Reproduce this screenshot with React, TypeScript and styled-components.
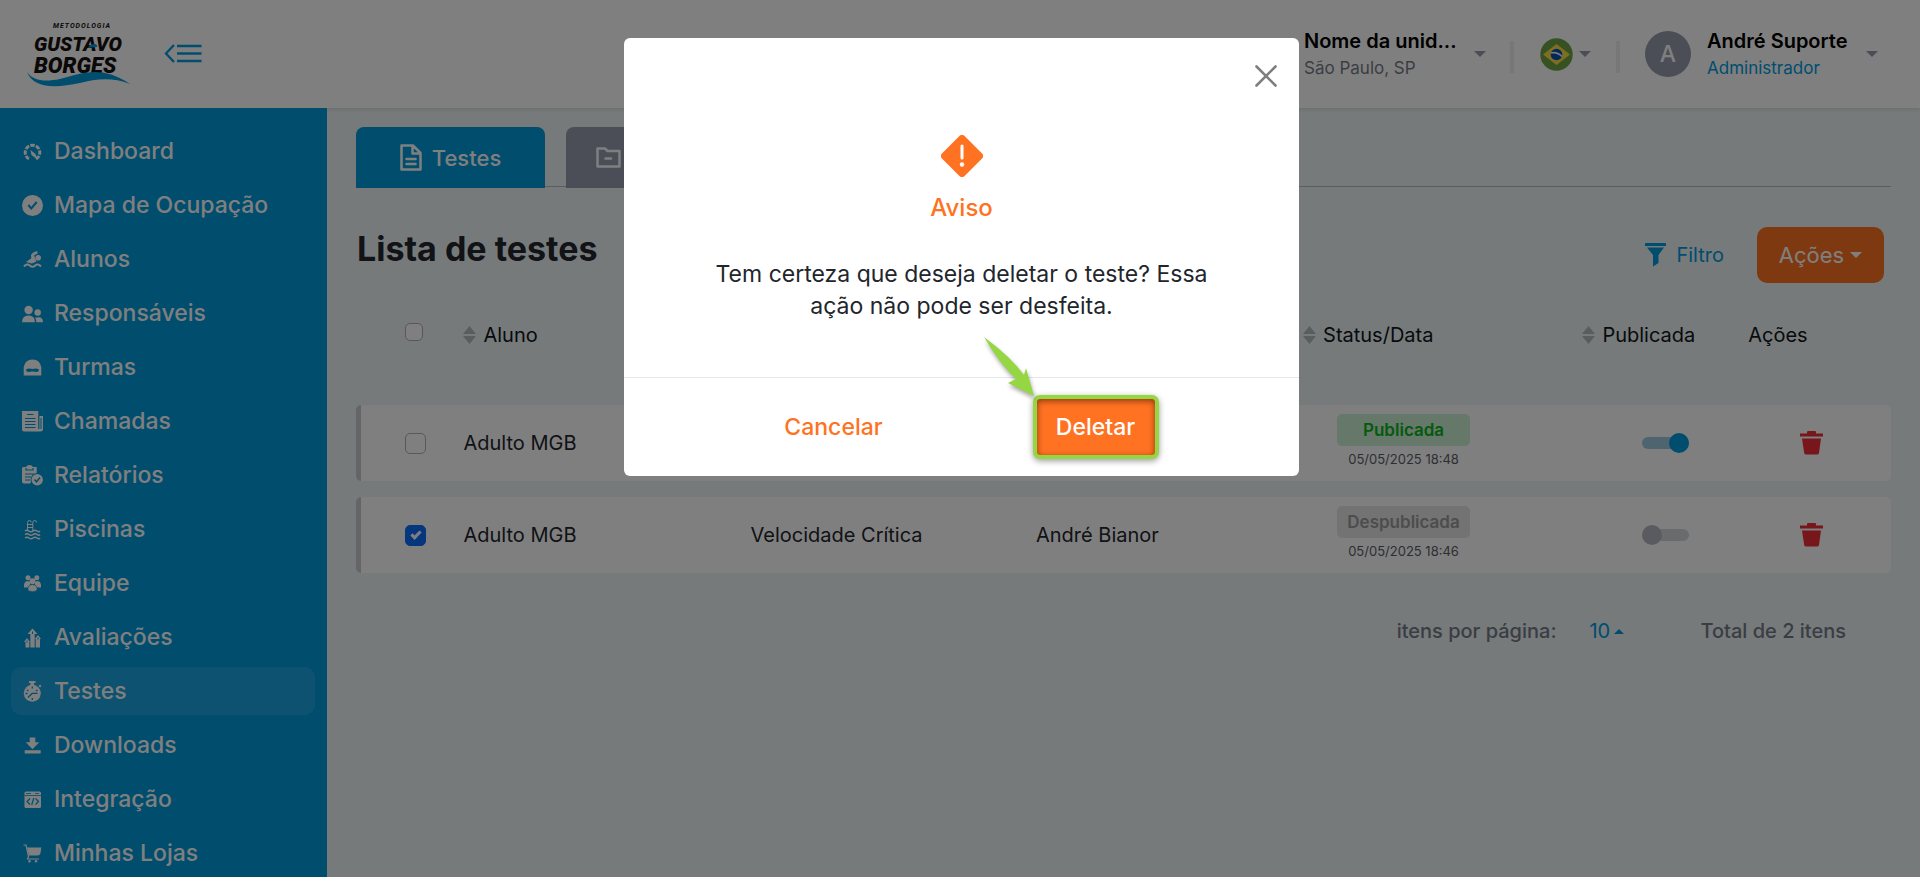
import React from "react";
import styled, { createGlobalStyle, css } from "styled-components";

const c = {
  blue: "#009add",
  orange: "#ff7222",
  page: "#ecf4f6",
  slate: "#969cae",
  muted: "#777b88",
  ink: "#22262c",
  red: "#ee2c36",
  lime: "#95d742",
};

const Global = createGlobalStyle`
  *, *::before, *::after { box-sizing: border-box; }
  body { margin: 0; background: ${c.page}; color: ${c.ink}; font-family: Inter, "Open Sans", sans-serif; font-size: 20px; }
  button, select { font: inherit; color: inherit; background: none; border: 0; padding: 0; cursor: pointer; }
  a { color: inherit; text-decoration: none; }
  h1, h2, p { margin: 0; }
  svg { display: block; flex: none; }
`;

/* ---------- shell ---------- */
const Shell = styled.div`
  display: flex;
  flex-direction: column;
  min-height: 100vh;
`;
const Header = styled.header`
  display: flex;
  align-items: center;
  height: 108px;
  padding: 0 42px 0 24px;
  background: #fff;
  box-shadow: 0 1px 4px rgba(0, 0, 0, 0.12);
`;
const Body = styled.div`
  display: flex;
  flex: 1;
`;
const Sidebar = styled.nav`
  flex: none;
  width: 327px;
  padding: 19px 12px 0 11px;
  background: ${c.blue};
`;
const Menu = styled.ul`
  display: flex;
  flex-direction: column;
  gap: 6px;
  margin: 0;
  padding: 0;
  list-style: none;
`;
const MenuLink = styled.a<{ $active?: boolean }>`
  display: flex;
  align-items: center;
  gap: 11px;
  height: 48px;
  padding-left: 11px;
  border-radius: 10px;
  color: #fff;
  font-size: 23px;
  font-weight: 500;
  background: ${(p) => (p.$active ? "rgba(255, 255, 255, 0.1)" : "transparent")};
`;
const Main = styled.main`
  flex: 1;
  min-width: 0;
  padding: 19px 29px 0;
`;

/* ---------- header ---------- */
const Collapse = styled.button`
  margin-left: 30px;
  color: ${c.blue};
`;
const HeaderRight = styled.div`
  display: flex;
  align-items: center;
  margin-left: auto;
`;
const HeaderButton = styled.button<{ $gap: number }>`
  display: flex;
  align-items: center;
  gap: ${(p) => p.$gap}px;
  text-align: left;
`;
const Stack = styled.span<{ $width: number }>`
  display: flex;
  flex-direction: column;
  width: ${(p) => p.$width}px;
  white-space: nowrap;
`;
const Strong = styled.span`
  color: #000;
  font-size: 20px;
  font-weight: 600;
  line-height: 28px;
`;
const Sub = styled.span<{ $accent?: boolean }>`
  color: ${(p) => (p.$accent ? c.blue : c.muted)};
  font-size: 17px;
  line-height: 26px;
`;
const Divider = styled.span<{ $left: number; $right: number }>`
  width: 4px;
  height: 32px;
  margin: 6px ${(p) => p.$right}px 0 ${(p) => p.$left}px;
  background: #eeeef0;
`;
const Avatar = styled.span`
  display: grid;
  place-items: center;
  width: 46px;
  height: 46px;
  border-radius: 50%;
  background: ${c.slate};
  color: #fff;
  font-size: 23px;
  font-weight: 500;
`;
const Caret = styled.span<{ $up?: boolean; $light?: boolean }>`
  width: 0;
  border: 6px solid transparent;
  ${(p) =>
    p.$up
      ? css`border-width: 0 5px 5px; border-bottom-color: currentColor;`
      : css`border-width: 6px 6px 0; border-top-color: ${p.$light ? "currentColor" : c.slate};`}
`;

/* ---------- content ---------- */
const Tabs = styled.div`
  display: flex;
  gap: 21px;
  height: 60px;
  border-bottom: 1px solid #b6bbc2;
`;
const Tab = styled.button<{ $active?: boolean }>`
  display: flex;
  align-items: center;
  justify-content: ${(p) => (p.$active ? "center" : "flex-start")};
  gap: 10px;
  width: 189px;
  height: 61px;
  padding: 0 30px;
  border-radius: 8px 8px 0 0;
  background: ${(p) => (p.$active ? c.blue : c.slate)};
  color: #fff;
  font-size: 22px;
  font-weight: 500;
`;
const TitleRow = styled.div`
  display: flex;
  align-items: center;
  justify-content: space-between;
  margin-top: 40px;
  padding: 0 7px 0 1px;
`;
const Title = styled.h1`
  margin-bottom: 12px;
  font-size: 34px;
  font-weight: 700;
  line-height: 42px;
`;
const Actions = styled.div`
  display: flex;
  align-items: center;
  gap: 33px;
`;
const Filter = styled.button`
  display: flex;
  align-items: center;
  gap: 10px;
  color: ${c.blue};
`;
const ActionButton = styled.button`
  display: flex;
  align-items: center;
  justify-content: center;
  gap: 6px;
  width: 127px;
  height: 56px;
  border-radius: 10px;
  background: ${c.orange};
  color: #fff;
  font-size: 22px;
`;

/* ---------- table ---------- */
const Table = styled.table`
  width: 100%;
  margin-top: 7px;
  border-spacing: 0 16px;
  table-layout: fixed;
`;
const Col = styled.col<{ $width: string }>`
  width: ${(p) => p.$width};
`;
const Th = styled.th`
  height: 83px;
  padding: 0 0 26px;
  color: #111418;
  font-weight: 400;
  line-height: 24px;
  text-align: left;
  vertical-align: middle;
`;
const SortButton = styled.button`
  display: flex;
  align-items: center;
  gap: 7px;
  svg { color: #b3bac0; }
`;
const Row = styled.tr`
  background: #fff;
`;
const Td = styled.td`
  height: 76px;
  padding: 0;
  &:first-child { border-left: 5px solid #cacad3; border-radius: 5px 0 0 5px; }
  &:last-child { border-radius: 0 5px 5px 0; }
`;
const CheckCell = styled.div<{ $head?: boolean }>`
  display: flex;
  padding: ${(p) => (p.$head ? "0 0 6px 49px" : "0 0 0 44px")};
`;
const Check = styled.input<{ $size: number }>`
  appearance: none;
  display: grid;
  place-items: center;
  width: ${(p) => p.$size}px;
  height: ${(p) => p.$size}px;
  margin: 0;
  border: 1px solid #b0b0b4;
  border-radius: 5px;
  background: #fff;
  &:checked { border-color: #0d6efd; background: #0d6efd; }
  &:checked::before {
    content: "";
    width: 10px;
    height: 6px;
    margin-bottom: 3px;
    border: solid #fff;
    border-width: 0 0 3px 3px;
    transform: rotate(-45deg);
  }
`;
const Status = styled.div`
  display: flex;
  flex-direction: column;
  align-items: center;
  width: 133px;
  margin-left: 34px;
`;
const Badge = styled.span<{ $on?: boolean }>`
  width: 100%;
  border-radius: 5px;
  background: ${(p) => (p.$on ? "#cdf0d4" : "#e6e6e6")};
  color: ${(p) => (p.$on ? "#0bb51b" : "#9b9b9b")};
  font-size: 17px;
  font-weight: 600;
  line-height: 32px;
  text-align: center;
`;
const Stamp = styled.time`
  color: #5b5d68;
  font-size: 13px;
  line-height: 26px;
`;
const Switch = styled.input`
  appearance: none;
  display: grid;
  align-items: center;
  width: 47px;
  height: 20px;
  margin: 0 0 0 60px;
  &::before, &::after { content: ""; grid-area: 1 / 1; }
  &::before { height: 12px; border-radius: 6px; background: #d5d6d9; }
  &::after { width: 20px; height: 20px; border-radius: 50%; background: #b4b7c2; }
  &:checked::before { background: #9dc9dc; }
  &:checked::after { justify-self: end; background: ${c.blue}; }
`;
const Trash = styled.button`
  display: block;
  margin-left: 52px;
  color: ${c.red};
`;
const Pager = styled.div`
  display: flex;
  align-items: center;
  justify-content: flex-end;
  margin-top: 30px;
  padding-right: 45px;
  color: ${c.muted};
  font-weight: 500;
  line-height: 24px;
`;
const PageSize = styled.label`
  display: flex;
  align-items: center;
  margin-right: 76px;
  select { appearance: none; width: 25px; margin-left: 33px; color: ${c.blue}; font-weight: 400; }
  span { color: ${c.blue}; }
`;

/* ---------- dialog ---------- */
const Overlay = styled.div`
  position: fixed;
  inset: 0;
  z-index: 10;
  display: flex;
  align-items: flex-start;
  justify-content: center;
  padding: 38px 0 0 3px;
  background: rgba(0, 0, 0, 0.5);
`;
const Dialog = styled.section`
  width: 675px;
  border-radius: 6px;
  background: #fff;
`;
const DialogBody = styled.div`
  display: flex;
  flex-direction: column;
  align-items: center;
  height: 340px;
  padding: 27px 22px 0;
  border-bottom: 1px solid #e6e7e9;
`;
const Close = styled.button`
  align-self: flex-end;
  margin-bottom: 48px;
  color: #7f7f7f;
`;
const DialogTitle = styled.h2`
  margin-top: 15px;
  color: ${c.orange};
  font-size: 24px;
  font-weight: 500;
  line-height: 32px;
`;
const DialogText = styled.p`
  width: 520px;
  margin-top: 34px;
  font-size: 23px;
  line-height: 32px;
  text-align: center;
`;
const DialogFooter = styled.footer`
  display: flex;
  align-items: center;
  justify-content: center;
  gap: 136px;
  height: 98px;
  padding-left: 6px;
`;
const DialogButton = styled.button<{ $primary?: boolean }>`
  position: relative;
  width: 126px;
  height: 64px;
  border-radius: 7px;
  color: ${c.orange};
  font-size: 23px;
  font-weight: 500;
  ${(p) =>
    p.$primary &&
    css`
      border: 4px solid ${c.lime};
      background: ${c.orange};
      color: #fff;
      box-shadow: inset 0 2px 6px rgba(60, 20, 0, 0.6), 0 2px 6px rgba(0, 0, 0, 0.4);
    `}
`;
const Pointer = styled.svg`
  position: absolute;
  left: -54px;
  top: -62px;
  overflow: visible;
  filter: drop-shadow(1px 3px 2px rgba(0, 0, 0, 0.35));
`;

/* ---------- drawings ---------- */
const Logo = () => (
  <svg width="110" height="70" viewBox="24 18 110 70" role="img" aria-label="Metodologia Gustavo Borges">
    <g fontFamily="Roboto, sans-serif" fontStyle="italic" fontWeight="900" fill="#16110e">
      <text x="53" y="27" fontSize="7" fontWeight="700" letterSpacing="1">METODOLOGIA</text>
      <text x="34" y="50" fontSize="20">GUSTAVO</text>
      <text x="34" y="72" fontSize="22">BORGES</text>
    </g>
    <path d="M27 71C33 80 45 81 60 78C84 72 101 64 130 83C112 76 96 78 80 82C56 87 34 88 27 71Z" fill={c.blue} />
    <path d="M88 47Q90 43 95 43Q98 44 97 46Q93 46 88 47Z" fill={c.blue} />
  </svg>
);
const CollapseIcon = () => (
  <svg width="38" height="20" viewBox="0 0 38 20" fill="none" stroke="currentColor" strokeWidth="2.300">
    <path d="M10 1L2 9.500L10 18M13 2H37.500M13 9.500H37.500M13 17H37.500" />
  </svg>
);
const Flag = () => (
  <svg width="33" height="33" viewBox="0 0 33 33">
    <circle cx="16.500" cy="16.500" r="16.200" fill="#6da544" />
    <path d="M16.500 6L30 16.500L16.500 27L3 16.500Z" fill="#ffda44" />
    <circle cx="16.500" cy="16.500" r="5.800" fill="#0052b4" />
    <path d="M11 15Q17 13.500 22 18.500" stroke="#f0f0f0" strokeWidth="1.600" fill="none" />
  </svg>
);
const FileIcon = () => (
  <svg width="22" height="27" viewBox="0 0 22 27" fill="none" stroke="currentColor" strokeWidth="2.500" strokeLinejoin="round" strokeLinecap="round">
    <path d="M1.500 1.500H13L20.500 9V25.500H1.500ZM12.500 2V9.500H20M6.500 15H15.500M6.500 20H15.500" />
  </svg>
);
const FolderIcon = () => (
  <svg width="25" height="21" viewBox="0 0 25 21" fill="none" stroke="currentColor" strokeWidth="2.500" strokeLinejoin="round" strokeLinecap="round">
    <path d="M1.500 1.500H9L11.500 4H23.500V19.500H1.500ZM9.500 11.500H15" />
  </svg>
);
const FunnelIcon = () => (
  <svg width="21" height="24" viewBox="0 0 21 24" fill="currentColor">
    <path d="M0 1Q0 0 1 0H20Q21 0 21 1V3H0ZM2 4.500H19L13.500 12V20L8 23.500V12Z" />
  </svg>
);
const SortIcon = () => (
  <svg width="13" height="18" viewBox="0 0 13 18" fill="currentColor">
    <path d="M6.500 0L13 8H0ZM0 10H13L6.500 18Z" />
  </svg>
);
const TrashIcon = () => (
  <svg width="23" height="24" viewBox="0 0 23 24" fill="currentColor">
    <path d="M0 2.500H7V1Q7 0 8 0H15Q16 0 16 1V2.500H23V5.500H0ZM2 7.500H21L19 22Q18.800 23.500 17 23.500H6Q4.500 23.500 4.200 22Z" />
  </svg>
);

const cut = (d: string, s = 1.2) => <path d={d} fill="none" stroke={c.blue} strokeWidth={s} />;
const line = (d: string, s = 2) => <path d={d} fill="none" stroke="#fff" strokeWidth={s} />;

const icons: Record<string, React.ReactNode> = {
  gauge: (
    <>
      <circle cx="10.500" cy="11.500" r="7.300" fill="none" stroke="#fff" strokeWidth="3" strokeDasharray="4.600 1.300" strokeDashoffset="2.300" pathLength="47.200" />
      <path d="M5 21L10.500 13L16 21Z" fill={c.blue} />
      <path d="M8.500 9L13.500 13L15.500 18.500L9.500 14Z" fill="#fff" />
    </>
  ),
  check: (<><circle cx="10.500" cy="10.500" r="10.500" />{cut("M6.300 10L9.300 13.500L14.700 7", 2)}</>),
  swimmer: (
    <>
      <circle cx="16.200" cy="8.800" r="2.800" />
      <path d="M15.500 2.200V4.500L12 6.500L14.500 12.500L10 14.500L4 13L9.300 9.300L9 6Q11 2.500 15.500 2.200Z" />
      {line("M2 17.500Q5 14 7.800 16.500T13.200 16.500T19 17.500")}
    </>
  ),
  people: (
    <>
      <circle cx="6.600" cy="7" r="4.200" /><circle cx="15.700" cy="9.500" r="3.200" />
      <path d="M0 19.200Q0 12.500 6.500 12.500T13 19.200ZM14.300 19.200Q14.500 16.500 13 14.800Q21 12.500 21 19.200Z" />
    </>
  ),
  cap: (
    <>
      <path d="M1.700 18.500V10.500Q3 2.500 10.500 2.500T19.300 10.500V18.500Z" />
      <path d="M4 12.500Q6.500 11 10.500 12Q14.500 11 17 12.500Q17 15 14 15L11.200 14.500H9.800L7 15Q4 15 4 12.500Z" fill={c.blue} />
    </>
  ),
  news: (
    <>
      <path d="M0 0H16.300V5H21V18.500Q21 20.500 18.500 20.500H2Q0 20.500 0 18.500Z" />
      {cut("M5 3.500H11.500M3 7.500H13.500M3 10.500H13.500M3 13.500H13.500M3 16.500H13.500M16.800 5V18")}
      {cut("M19 7V18", 1)}
    </>
  ),
  report: (
    <>
      <path d="M1 2H4Q5 0 7.500 0T11 2H14.700V9L8 18.500H2Q0 18.500 0 16.500V4Q0 2 1 2Z" />
      {cut("M4 3V5H11V3M3 9H12M3 12H9M3 15H8")}
      <circle cx="15.200" cy="14.700" r="6.600" fill={c.blue} /><circle cx="15.200" cy="14.700" r="5.700" />
      {cut("M12.500 14.500L14.500 16.800L18 12.500", 1.5)}
    </>
  ),
  pool: (
    <>
      {line("M5.500 12V3.500Q5.500 1.500 7.500 1.500T9 3.500M10.800 12V3.500Q10.800 1.500 12.800 1.500T14.300 3.500M5.500 5.500H11M5.500 8.500H11", 1)}
      {line("M3 12Q5 10.500 7 12T11 12T15 12T18 12M3 15.500Q5 14 7 15.500T11 15.500T15 15.500T18 15.500M3 19Q5 17.500 7 19T11 19T15 19T18 19", 1.5)}
    </>
  ),
  team: (
    <>
      <circle cx="6" cy="4.800" r="2.500" /><circle cx="14.800" cy="4.800" r="2.500" />
      <path d="M2 14.500Q1.500 8 5.500 8L8 9V14.500ZM19 14.500Q19.500 8 15.500 8L13 9V14.500Z" />
      <circle cx="10.500" cy="8.200" r="3" />
      <path d="M5.800 17.500Q5.500 11.500 10.500 11.500T15.200 17.500Q10.500 20 5.800 17.500Z" stroke={c.blue} strokeWidth="0.700" />
    </>
  ),
  growth: (
    <>
      <path d="M8.300 20.500V7H5.500L10.500 1.500L15.500 7H12.700V20.500ZM3.500 20.500V15H2L5 11L8 15H7.300V20.500ZM13.700 20.500V12H12.800L16 8L19 12H18V20.500Z" />
      {cut("M10.500 4.500V7M5 13.500V15.500M16 10.500V12.500", 1)}
    </>
  ),
  timer: (
    <>
      <circle cx="10.300" cy="12.300" r="8.500" />
      <path d="M7 0H13.500V2H12V5H8.500V2H7ZM16.500 5L18 3.500L19.500 5L18 6.500Z" />
      {cut("M10.300 12.300H15.500M10.300 12.300L6 16.500M10.300 5.500V7.500M5 9L6.500 10M15.500 9L14 10M3.500 12.500H5.500M10.300 17V19", 1.3)}
    </>
  ),
  download: <path d="M7.700 2.500H13.300V7.200H17.300L10.500 14.200L3.700 7.200H7.700ZM2.700 15.300H18.700V18.500H2.700Z" />,
  code: (
    <>
      <rect x="2.500" y="2.500" width="16.500" height="16.500" rx="1.500" />
      {cut("M2.500 6.500H19M13 4.500H17M4 4.500H9", 0.8)}
      {cut("M8 9.500L5 12.500L8 15.500M13.500 9.500L16.500 12.500L13.500 15.500M11.800 9L9.700 16")}
    </>
  ),
  cart: (
    <>
      <path d="M5 4.500H19.300L18.500 10Q18 12.500 15.500 12.500H7Z" />
      {line("M1.500 2H4L6.500 13.500L5.500 16H17", 1.2)}
      <circle cx="7.500" cy="18.300" r="1.200" /><circle cx="14" cy="18.300" r="1.200" />
    </>
  ),
};

const menu: [string, string][] = [
  ["Dashboard", "gauge"],
  ["Mapa de Ocupação", "check"],
  ["Alunos", "swimmer"],
  ["Responsáveis", "people"],
  ["Turmas", "cap"],
  ["Chamadas", "news"],
  ["Relatórios", "report"],
  ["Piscinas", "pool"],
  ["Equipe", "team"],
  ["Avaliações", "growth"],
  ["Testes", "timer"],
  ["Downloads", "download"],
  ["Integração", "code"],
  ["Minhas Lojas", "cart"],
];

const columns = ["7%", "18.7%", "18.6%", "17.4%", "18.2%", "10.8%", "auto"];

const rows = [
  { id: 1, student: "Adulto MGB", test: "", teacher: "", on: true, date: "05/05/2025 18:48", picked: false },
  { id: 2, student: "Adulto MGB", test: "Velocidade Crítica", teacher: "André Bianor", on: false, date: "05/05/2025 18:46", picked: true },
];

const Sortable = ({ children }: { children: React.ReactNode }) => (
  <SortButton type="button"><SortIcon />{children}</SortButton>
);

export default function App() {
  return (
    <>
      <Global />
      <Shell>
        <Header>
          <Logo />
          <Collapse type="button" aria-label="Recolher menu"><CollapseIcon /></Collapse>
          <HeaderRight>
            <HeaderButton type="button" $gap={18}>
              <Stack $width={152}><Strong>Nome da unid...</Strong><Sub>São Paulo, SP</Sub></Stack>
              <Caret />
            </HeaderButton>
            <Divider $left={24} $right={26} />
            <HeaderButton type="button" $gap={6} aria-label="Idioma"><Flag /><Caret /></HeaderButton>
            <Divider $left={25} $right={25} />
            <HeaderButton type="button" $gap={16}>
              <Avatar>A</Avatar>
              <Stack $width={143}><Strong>André Suporte</Strong><Sub $accent>Administrador</Sub></Stack>
              <Caret />
            </HeaderButton>
          </HeaderRight>
        </Header>
        <Body>
          <Sidebar>
            <Menu>
              {menu.map(([label, icon]) => (
                <li key={label}>
                  <MenuLink href="#" $active={label === "Testes"}>
                    <svg width="21" height="21" viewBox="0 0 21 21" fill="#fff">{icons[icon]}</svg>
                    {label}
                  </MenuLink>
                </li>
              ))}
            </Menu>
          </Sidebar>
          <Main>
            <Tabs>
              <Tab type="button" $active><FileIcon />Testes</Tab>
              <Tab type="button" aria-label="Arquivados"><FolderIcon /></Tab>
            </Tabs>
            <TitleRow>
              <Title>Lista de testes</Title>
              <Actions>
                <Filter type="button"><FunnelIcon />Filtro</Filter>
                <ActionButton type="button">Ações<Caret $light /></ActionButton>
              </Actions>
            </TitleRow>
            <Table>
              <colgroup>
                {columns.map((width, i) => <Col key={i} $width={width} />)}
              </colgroup>
              <thead>
                <tr>
                  <Th><CheckCell $head><Check type="checkbox" $size={18} aria-label="Selecionar todos" /></CheckCell></Th>
                  <Th><Sortable>Aluno</Sortable></Th>
                  <Th />
                  <Th />
                  <Th><Sortable>Status/Data</Sortable></Th>
                  <Th><Sortable>Publicada</Sortable></Th>
                  <Th>Ações</Th>
                </tr>
              </thead>
              <tbody>
                {rows.map((r) => (
                  <Row key={r.id}>
                    <Td><CheckCell><Check type="checkbox" $size={21} defaultChecked={r.picked} aria-label="Selecionar teste" /></CheckCell></Td>
                    <Td>{r.student}</Td>
                    <Td>{r.test}</Td>
                    <Td>{r.teacher}</Td>
                    <Td>
                      <Status>
                        <Badge $on={r.on}>{r.on ? "Publicada" : "Despublicada"}</Badge>
                        <Stamp>{r.date}</Stamp>
                      </Status>
                    </Td>
                    <Td><Switch type="checkbox" role="switch" defaultChecked={r.on} aria-label="Publicar teste" /></Td>
                    <Td><Trash type="button" aria-label="Deletar teste"><TrashIcon /></Trash></Td>
                  </Row>
                ))}
              </tbody>
            </Table>
            <Pager>
              <PageSize>
                itens por página:
                <select defaultValue="10"><option>10</option></select>
                <Caret $up />
              </PageSize>
              Total de 2 itens
            </Pager>
          </Main>
        </Body>
      </Shell>
      <Overlay>
        <Dialog role="dialog" aria-modal="true" aria-labelledby="dialog-title">
          <DialogBody>
            <Close type="button" aria-label="Fechar">
              <svg width="22" height="22" viewBox="0 0 22 22" stroke="currentColor" strokeWidth="2.600" strokeLinecap="round">
                <path d="M1.500 1.500L20.500 20.500M20.500 1.500L1.500 20.500" />
              </svg>
            </Close>
            <svg width="42" height="42" viewBox="0 0 42 42">
              <rect x="5" y="5" width="32" height="32" rx="4" transform="rotate(45 21 21)" fill={c.orange} />
              <path d="M21 11V23" stroke="#fff" strokeWidth="3" strokeLinecap="round" />
              <circle cx="21" cy="29.500" r="2.200" fill="#fff" />
            </svg>
            <DialogTitle id="dialog-title">Aviso</DialogTitle>
            <DialogText>Tem certeza que deseja deletar o teste? Essa ação não pode ser desfeita.</DialogText>
          </DialogBody>
          <DialogFooter>
            <DialogButton type="button">Cancelar</DialogButton>
            <DialogButton type="button" $primary>
              Deletar
              <Pointer width="52" height="60" viewBox="0 0 52 60">
                <path d="M1 0Q28 20 41 38L43 31L51 59L25 46L33 42Q16 26 1 0Z" fill={c.lime} />
              </Pointer>
            </DialogButton>
          </DialogFooter>
        </Dialog>
      </Overlay>
    </>
  );
}
